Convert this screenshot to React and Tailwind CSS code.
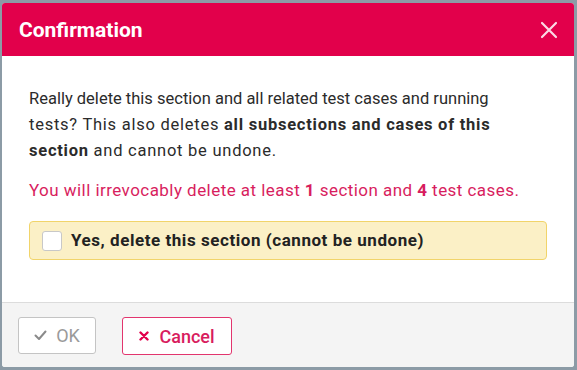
import React, { useState } from "react";

export default function App() {
  const [confirmed, setConfirmed] = useState(false);

  return (
    <div className="w-[577px] h-[370px] bg-[#8c9ba6] pt-[3px] pl-[2px] pr-[3px] pb-[3px] font-['Roboto',sans-serif]">
      <div className="h-full flex flex-col bg-white rounded-[3px] overflow-hidden">
        {/* Header */}
        <div className="h-[53px] shrink-0 bg-[#e2004b] flex items-center justify-between pl-[17px] pr-[16px]">
          <h2 className="text-white text-[21px] font-bold pt-[3px]">Confirmation</h2>
          <svg width="18" height="18" viewBox="0 0 18 18" className="text-white/85">
            <path d="M2 2 L16 16 M16 2 L2 16" stroke="currentColor" strokeWidth="2.2" strokeLinecap="round" />
          </svg>
        </div>

        {/* Body */}
        <div className="flex-1 px-[27px] pt-[30px]">
          <p className="text-[#2b2b2b] text-[16.5px] leading-[26px] whitespace-nowrap">
            <span>Really delete this section and all related test cases and running</span>
            <br />
            <span className="tracking-[0.75px]">
              tests? This also deletes <b className="font-bold">all subsections and cases of this</b>
            </span>
            <br />
            <span className="tracking-[0.75px]">
              <b className="font-bold">section</b> and cannot be undone.
            </span>
          </p>
          <p className="mt-[13px] text-[#d81d5e] text-[17px] leading-[26px] tracking-[0.45px]">
            You will irrevocably delete at least <b>1</b> section and <b>4</b> test cases.
          </p>
          <label className="mt-[18px] h-[39px] flex items-center gap-[9px] pl-[12px] bg-[#fbf0c6] border border-[#f1d46a] rounded-[4px] cursor-pointer">
            <input
              type="checkbox"
              checked={confirmed}
              onChange={(e) => setConfirmed(e.target.checked)}
              className="appearance-none w-[20px] h-[20px] bg-white border border-[#c8c8c8] rounded-[3px]"
            />
            <span className="text-[#222] text-[17px] font-bold tracking-[0.55px]">Yes, delete this section (cannot be undone)</span>
          </label>
        </div>

        {/* Footer */}
        <div className="h-[65px] shrink-0 bg-[#f4f4f4] border-t border-[#dcdcdc] flex items-start gap-[26px] pl-[16px] pt-[14px]">
          <button className="h-[37px] w-[78px] flex items-center justify-center gap-[9px] bg-white border border-[#c4c4c4] rounded-[3px] text-[#9a9a9a] text-[18px]">
            <svg width="13" height="11" viewBox="0 0 13 11">
              <path d="M1.5 5.5 L5 9 L11.5 1.5" fill="none" stroke="#8a8a8a" strokeWidth="2" strokeLinecap="round" strokeLinejoin="round" />
            </svg>
            OK
          </button>
          <button className="h-[38px] w-[110px] flex items-center justify-center gap-[10px] bg-white border border-[#e2356e] rounded-[3px] text-[#d81d5e] text-[18px] font-medium">
            <svg width="10" height="10" viewBox="0 0 10 10">
              <path d="M1.5 1.5 L8.5 8.5 M8.5 1.5 L1.5 8.5" stroke="#e2004b" strokeWidth="2.4" strokeLinecap="round" />
            </svg>
            Cancel
          </button>
        </div>
      </div>
    </div>
  );
}
